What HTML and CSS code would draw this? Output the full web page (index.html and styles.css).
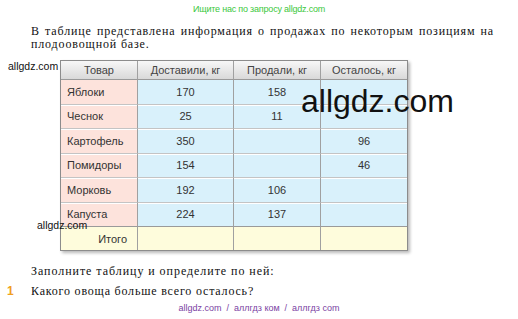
FILE: index.html
```html
<!DOCTYPE html>
<html lang="ru">
<head>
<meta charset="utf-8">
<link rel="stylesheet" href="styles.css">
</head>
<body>
<div class="page">
  <div class="top-note">Ищите нас по запросу allgdz.com</div>
  <p class="intro">
    <span class="line-full">В таблице представлена информация о продажах по некоторым позициям на</span>
    <span class="line-last">плодоовощной базе.</span>
  </p>
  <div class="table-area">
    <div class="side-mark">allgdz.com</div>
    <table class="sales">
      <thead>
        <tr><th class="c1">Товар</th><th class="c2">Доставили, кг</th><th class="c3">Продали, кг</th><th class="c4">Осталось, кг</th></tr>
      </thead>
      <tbody>
        <tr><td class="name">Яблоки</td><td>170</td><td>158</td><td></td></tr>
        <tr><td class="name">Чеснок</td><td>25</td><td>11</td><td></td></tr>
        <tr><td class="name">Картофель</td><td>350</td><td></td><td>96</td></tr>
        <tr><td class="name">Помидоры</td><td>154</td><td></td><td>46</td></tr>
        <tr><td class="name">Морковь</td><td>192</td><td>106</td><td></td></tr>
        <tr><td class="name">Капуста</td><td>224</td><td>137</td><td></td></tr>
        <tr class="total"><td class="name">Итого</td><td></td><td></td><td></td></tr>
      </tbody>
    </table>
    <div class="big-mark">allgdz.com</div>
    <div class="small-mark">allgdz.com</div>
  </div>
  <p class="question">Заполните таблицу и определите по ней:</p>
  <div class="task"><span class="num">1</span><span class="task-text">Какого овоща больше всего осталось?</span></div>
  <div class="bottom-note">allgdz.com &nbsp;/&nbsp; аллгдз ком &nbsp;/&nbsp; аллгдз com</div>
</div>
</body>
</html>
```
FILE: styles.css
```css
html, body {
  margin: 0;
  padding: 0;
  background: #ffffff;
}
.page {
  width: 518px;
  height: 319px;
  overflow: hidden;
  font-family: "Liberation Sans", Arial, sans-serif;
  color: #222;
}
.top-note {
  height: 18px;
  line-height: 18px;
  font-size: 9px;
  letter-spacing: -0.2px;
  text-align: center;
  color: #3cc83c;
}
.intro {
  margin: 6.5px 24px 0 31px;
  font-family: "Liberation Serif", "Times New Roman", serif;
  font-size: 12px;
  line-height: 13px;
  letter-spacing: 0.85px;
  color: #111;
}
.line-full {
  display: block;
  text-align: justify;
  text-align-last: justify;
}
.line-last {
  display: block;
}
.table-area {
  position: relative;
  margin-top: 9.5px;
  display: flex;
  align-items: flex-start;
}
.side-mark {
  width: 52px;
  padding-left: 8px;
  font-size: 10.5px;
  line-height: 12px;
  color: #111;
}
.sales {
  border-collapse: separate;
  border-spacing: 0;
  border: 1px solid #8c8c8c;
  box-shadow: 2px 2px 3px rgba(0, 0, 0, 0.28);
  font-size: 11px;
  color: #333;
  table-layout: fixed;
  width: 347px;
}
.sales th, .sales td {
  padding: 0;
  text-align: center;
  border-right: 1px solid #a0a0a0;
}
.sales th:last-child, .sales td:last-child {
  border-right: none;
}
.c1 { width: 76px; }
.c2 { width: 95px; }
.c3 { width: 86px; }
.c4 { width: 86px; }
.sales th {
  height: 18px;
  font-weight: normal;
  color: #444;
  background: linear-gradient(#f7f7f7, #d9d9d9);
  border-bottom: 1px solid #9a9a9a;
}
.sales td {
  height: 23.5px;
  background: #d9f1fb;
  border-bottom: 1px solid #c4c4c4;
  box-shadow: inset 0 1px 0 #ffffff;
}
.sales tbody tr:first-child td {
  box-shadow: none;
}
.sales td.name {
  background: #fde3dc;
  text-align: left;
  padding-left: 6px;
}
.sales tbody tr:nth-child(6) td {
  border-bottom: 1px solid #9a9a9a;
}
.sales tr.total td {
  height: 23px;
  background: #fefcdc;
  border-bottom: none;
  box-shadow: none;
}
.sales tr.total td.name {
  background: #fefcdc;
  text-align: right;
  padding-right: 10px;
}
.big-mark {
  position: absolute;
  left: 301px;
  top: 25px;
  font-size: 32px;
  line-height: 32px;
  color: #111;
}
.small-mark {
  position: absolute;
  left: 37px;
  top: 159px;
  font-size: 10.5px;
  line-height: 12px;
  color: #111;
}
.question {
  margin: 13.5px 0 0 31px;
  font-family: "Liberation Serif", "Times New Roman", serif;
  font-size: 12px;
  line-height: 13px;
  letter-spacing: 0.95px;
  color: #111;
}
.task {
  margin-top: 7px;
  display: flex;
  font-size: 12px;
  line-height: 13px;
}
.num {
  width: 31px;
  padding-left: 7px;
  box-sizing: border-box;
  font-weight: bold;
  color: #f0a020;
}
.task-text {
  font-family: "Liberation Serif", "Times New Roman", serif;
  letter-spacing: 0.8px;
  color: #111;
}
.bottom-note {
  margin-top: 5px;
  text-align: center;
  font-size: 9px;
  line-height: 11px;
  color: #7b3fa3;
}
```
